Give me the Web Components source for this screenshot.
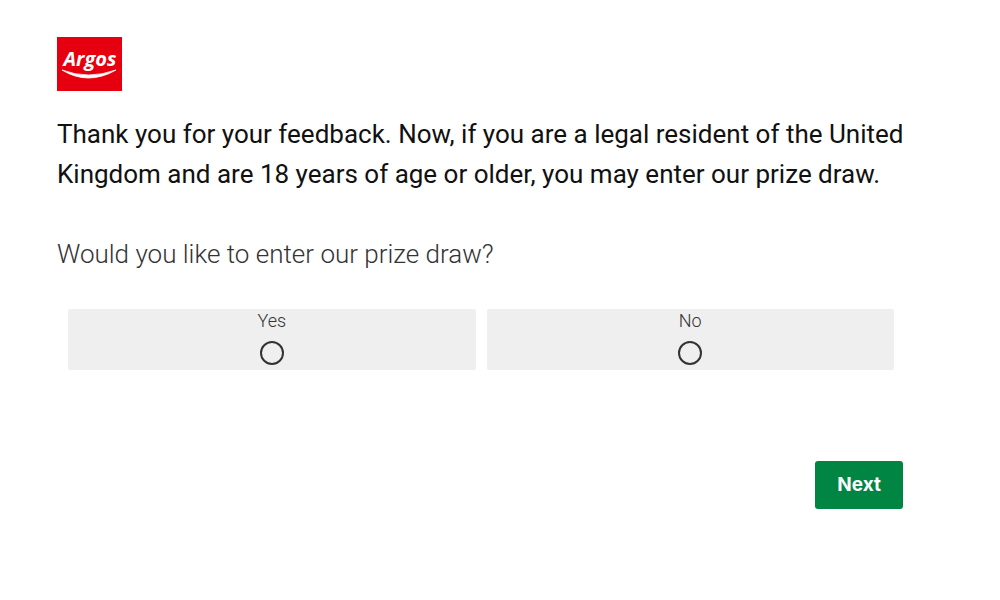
<!DOCTYPE html>
<html lang="en">
<head>
<meta charset="utf-8">
<meta name="viewport" content="width=device-width, initial-scale=1">
<title>Argos prize draw</title>
<style>
  body { margin: 0; background: #fff; color: #111; font-family: Roboto, "Liberation Sans", sans-serif; }
</style>
</head>
<body>
<survey-page>
  <brand-logo slot="logo"></brand-logo>
  <survey-intro>Thank you for your feedback. Now, if you are a legal resident of the United Kingdom and are 18 years of age or older, you may enter our prize draw.</survey-intro>
  <choice-question first="Yes" second="No">Would you like to enter our prize draw?</choice-question>
  <next-button slot="actions">Next</next-button>
</survey-page>

<script>
function define(name, html) {
  const template = document.createElement('template');
  template.innerHTML = html;
  customElements.define(name, class extends HTMLElement {
    constructor() {
      super();
      const root = this.attachShadow({ mode: 'open' });
      root.append(template.content.cloneNode(true));
      root.querySelectorAll('[data-from]').forEach(el => {
        el.textContent = this.getAttribute(el.dataset.from);
      });
    }
  });
}

define('brand-logo', `
  <style>
    :host { display: block; }
    svg { display: block; width: 65px; height: 54px; }
    text { font: italic 700 20px "Open Sans", "Liberation Sans", sans-serif; fill: #fff; }
  </style>
  <svg viewBox="0 0 65 54" role="img" aria-label="Argos">
    <rect width="65" height="54" fill="#e6000f"/>
    <text x="33" y="29" text-anchor="middle">Argos</text>
    <path d="M5 33 Q31 49 59 33 Q31 43 5 33Z" fill="#fff" stroke="#fff" stroke-width=".8"/>
  </svg>`);

define('survey-intro', `
  <style>
    :host { display: block; margin-right: -8px; }
    h1 { margin: 0; font-size: 26px; font-weight: 450; line-height: 40px; }
  </style>
  <h1><slot></slot></h1>`);

define('choice-question', `
  <style>
    :host { display: block; margin-top: 40px; }
    fieldset { margin: 0; padding: 0; border: 0; min-width: 0; }
    legend { padding: 0; font-size: 26px; font-weight: 300; line-height: 40px; color: #333; }
    .options { display: grid; grid-template-columns: 1fr 1fr; gap: 11px; padding: 0 9px 0 11px; margin-top: 35px; }
    label { display: flex; flex-direction: column; align-items: center; gap: 8px; padding-bottom: 5px;
      background: #efefef; border-radius: 2px; font-size: 18px; font-weight: 300; line-height: 24px; color: #333; cursor: pointer; }
    input { appearance: none; box-sizing: border-box; width: 24px; height: 24px; margin: 0; border: 2px solid #333; border-radius: 50%; }
    input:checked { background: radial-gradient(#333 50%, transparent 55%); }
  </style>
  <fieldset>
    <legend><slot></slot></legend>
    <div class="options">
      <label for="yes"><span data-from="first"></span><input type="radio" id="yes" name="draw" value="yes"></label>
      <label for="no"><span data-from="second"></span><input type="radio" id="no" name="draw" value="no"></label>
    </div>
  </fieldset>`);

define('next-button', `
  <style>
    :host { display: block; }
    button { display: block; padding: 12px 22px; border: 0; border-radius: 3px; background: #008542; color: #fff;
      font: 700 19px/24px Inter, "Liberation Sans", sans-serif; cursor: pointer; }
  </style>
  <button type="button"><slot></slot></button>`);

define('survey-page', `
  <style>
    :host { display: block; padding: 37px 97px 36px 57px; }
    main { margin-top: 23px; }
    footer { display: flex; justify-content: flex-end; margin-top: 91px; }
  </style>
  <header><slot name="logo"></slot></header>
  <main><slot></slot></main>
  <footer><slot name="actions"></slot></footer>`);
</script>
</body>
</html>
